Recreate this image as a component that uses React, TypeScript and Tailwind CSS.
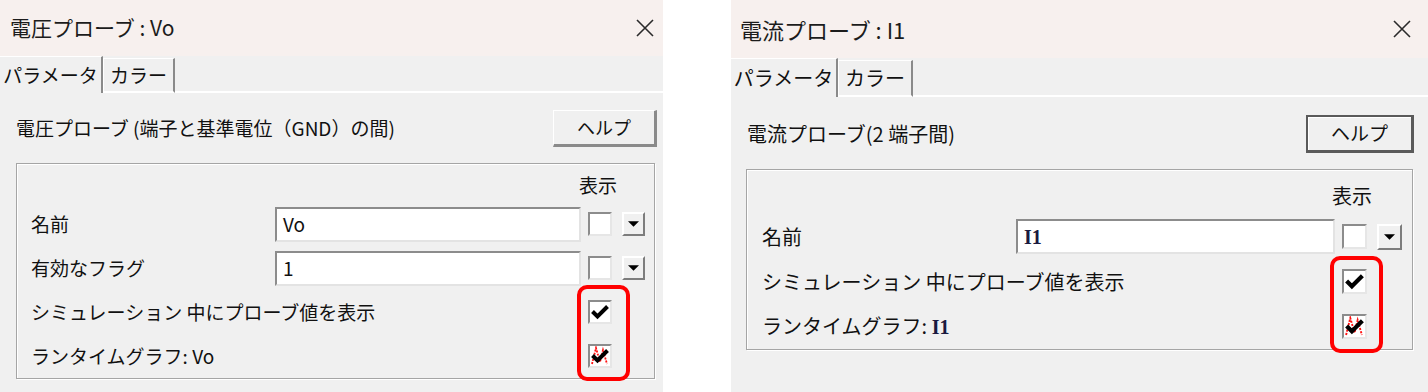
import React from "react";

const FONT = "font-['Noto_Sans_CJK_JP','Noto_Sans',sans-serif]";

// Sunken Win32 checkbox
const CheckBox = ({
  state,
  className = "",
}: {
  state: "off" | "on" | "graph";
  className?: string;
}) => (
  <div
    className={`shrink-0 border-2 border-t-[#8c8c8c] border-l-[#8c8c8c] border-r-[#e6e6e6] border-b-[#e6e6e6] bg-white ${className}`}
  >
    {state !== "off" && (
      <svg viewBox="0 0 20 20" className="w-full h-full">
        {state === "graph" && (
          <path
            d="M2 18 L6 2 L10 16 L13 4 L17 18"
            fill="none"
            stroke="#ff1010"
            strokeWidth="1.8"
            strokeDasharray="2 1.2"
          />
        )}
        <polyline
          points="2.5,9.5 7.5,14.5 17.5,4.5"
          fill="none"
          stroke="#000"
          strokeWidth="4"
          strokeLinejoin="miter"
        />
      </svg>
    )}
  </div>
);

// Raised button with a down triangle
const DropButton = ({ className = "" }: { className?: string }) => (
  <div
    className={`shrink-0 flex items-center justify-center border-2 border-t-white border-l-white border-r-[#7d7d7d] border-b-[#7d7d7d] bg-[#f0f0f0] ${className}`}
  >
    <svg viewBox="0 0 12 6" className="w-[11px] h-[6px]">
      <polygon points="0,0 12,0 6,6" fill="#000" />
    </svg>
  </div>
);

const CloseIcon = () => (
  <svg viewBox="0 0 20 20" className="w-[20px] h-[20px]">
    <path d="M2 2 L18 18 M18 2 L2 18" stroke="#2a2a2a" strokeWidth="1.6" fill="none" />
  </svg>
);

type Row = {
  label: React.ReactNode;
  value?: React.ReactNode;
  check: "off" | "on" | "graph";
  drop?: boolean;
};

type Dims = {
  width: string;
  titleBar: string;
  titleText: string;
  strip: string;
  tab1: string;
  tab2: string;
  tabText: string;
  labelRow: string;
  help: string;
  helpText: string;
  group: string;
  header: string;
  row: string;
  rowPad: string;
  input: string;
  check: string;
  drop: string;
  dropSpacer: string;
  body: string;
  redBox: string;
};

const Dialog = ({
  title,
  heading,
  rows,
  d,
  defaultHelp,
}: {
  title: string;
  heading: React.ReactNode;
  rows: Row[];
  d: Dims;
  defaultHelp?: boolean;
}) => (
  <div className={`flex flex-col h-full bg-[#f0f0f0] text-[#111] ${FONT} ${d.width}`}>
    {/* Title bar */}
    <div className={`flex items-center justify-between bg-[#f7f0ee] ${d.titleBar}`}>
      <span className={`${d.titleText} text-[#1c1c1c]`}>{title}</span>
      <CloseIcon />
    </div>

    {/* Tabs */}
    <div className={`flex items-end ${d.strip}`}>
      <div
        className={`flex items-center justify-center h-full border-t border-white border-r-2 border-r-[#8a8a8a] ${d.tab1} ${d.tabText}`}
      >
        パラメータ
      </div>
      <div
        className={`flex items-center justify-center border-t border-l border-white border-r-2 border-r-[#8a8a8a] border-b-2 border-b-white ${d.tab2} ${d.tabText}`}
      >
        カラー
      </div>
      <div className="flex-1 self-end border-b-2 border-white" />
    </div>

    {/* Heading + help */}
    <div className={`flex items-center justify-between ${d.labelRow}`}>
      <span className={d.body}>{heading}</span>
      <div
        className={`flex items-center justify-center bg-[#f0f0f0] ${
          defaultHelp
            ? "border-2 border-[#5a5a5a] border-r-[3px] border-b-[3px] shadow-[inset_1px_1px_0_#fff]"
            : "border border-t-white border-l-white border-r-[3px] border-b-[3px] border-r-[#8a8a8a] border-b-[#8a8a8a]"
        } ${d.help} ${d.helpText}`}
      >
        ヘルプ
      </div>
    </div>

    {/* Group box */}
    <div
      className={`relative flex flex-col border border-[#a5a5a5] shadow-[1px_1px_0_#fff,inset_1px_1px_0_#fff] ${d.group}`}
    >
      <div className={`flex justify-end ${d.header} ${d.body}`}>表示</div>
      {rows.map((r, i) => (
        <div key={i} className={`flex items-center ${d.row} ${d.rowPad}`}>
          <span className={`flex-1 ${d.body}`}>{r.label}</span>
          {r.value !== undefined && (
            <div
              className={`flex items-center pl-[6px] bg-white border-2 border-t-[#8c8c8c] border-l-[#8c8c8c] border-r-[#e3e3e3] border-b-[#e3e3e3] ${d.input} ${d.body}`}
            >
              {r.value}
            </div>
          )}
          <CheckBox state={r.check} className={`ml-[7px] ${d.check}`} />
          {r.drop ? (
            <DropButton className={`ml-[10px] ${d.drop}`} />
          ) : (
            <div className={`ml-[10px] shrink-0 ${d.dropSpacer}`} />
          )}
        </div>
      ))}
      {/* highlight marker */}
      <div className={`absolute border-4 border-[#ff0000] rounded-[10px] ${d.redBox}`} />
    </div>
  </div>
);

const leftDims: Dims = {
  width: "w-[663px]",
  titleBar: "h-[56px] pl-[10px] pr-[8px]",
  titleText: "text-[21px]",
  strip: "h-[37px]",
  tab1: "w-[103px]",
  tab2: "w-[72px] h-[35px]",
  tabText: "text-[19px]",
  labelRow: "mt-[17px] h-[37px] pl-[16px] pr-[6px]",
  help: "w-[104px] h-[37px]",
  helpText: "text-[18px]",
  group: "mt-[16px] ml-[16px] mr-[8px] h-[216px]",
  header: "h-[38px] pt-[10px] pr-[37px] leading-[22px]",
  row: "h-[44px]",
  rowPad: "pl-[14px] pr-[9px]",
  input: "w-[306px] h-[35px]",
  check: "w-[24px] h-[24px]",
  drop: "w-[23px] h-[24px]",
  dropSpacer: "w-[23px]",
  body: "text-[19px]",
  redBox: "left-[560px] top-[121px] w-[53px] h-[96px]",
};

const rightDims: Dims = {
  width: "w-[697px]",
  titleBar: "h-[58px] pl-[9px] pr-[16px]",
  titleText: "text-[22px]",
  strip: "h-[39px]",
  tab1: "w-[107px]",
  tab2: "w-[75px] h-[37px]",
  tabText: "text-[20px]",
  labelRow: "mt-[18px] h-[38px] pl-[16px] pr-[14px]",
  help: "w-[108px] h-[38px]",
  helpText: "text-[19px]",
  group: "mt-[16px] ml-[15px] mr-[15px] h-[181px]",
  header: "h-[44px] pt-[14px] pr-[40px] leading-[23px]",
  row: "h-[45px]",
  rowPad: "pl-[15px] pr-[10px]",
  input: "w-[319px] h-[35px]",
  check: "w-[25px] h-[25px]",
  drop: "w-[25px] h-[26px]",
  dropSpacer: "w-[25px]",
  body: "text-[20px]",
  redBox: "left-[583px] top-[86px] w-[53px] h-[97px]",
};

const Serif = ({ children }: { children: React.ReactNode }) => (
  <span className="font-['Liberation_Serif',serif] font-bold text-[#1a1a40]">{children}</span>
);

export default function App() {
  return (
    <div className="flex w-[1428px] h-[392px] bg-white overflow-hidden">
      <Dialog
        title="電圧プローブ : Vo"
        heading="電圧プローブ (端子と基準電位（GND）の間)"
        d={leftDims}
        rows={[
          { label: "名前", value: "Vo", check: "off", drop: true },
          { label: "有効なフラグ", value: "1", check: "off", drop: true },
          { label: "シミュレーション 中にプローブ値を表示", check: "on" },
          { label: "ランタイムグラフ: Vo", check: "graph" },
        ]}
      />
      <div className="w-[68px] shrink-0" />
      <Dialog
        title="電流プローブ : I1"
        heading="電流プローブ(2 端子間)"
        d={rightDims}
        defaultHelp
        rows={[
          { label: "名前", value: <Serif>I1</Serif>, check: "off", drop: true },
          { label: "シミュレーション 中にプローブ値を表示", check: "on" },
          {
            label: (
              <>
                ランタイムグラフ: <Serif>I1</Serif>
              </>
            ),
            check: "graph",
          },
        ]}
      />
    </div>
  );
}
